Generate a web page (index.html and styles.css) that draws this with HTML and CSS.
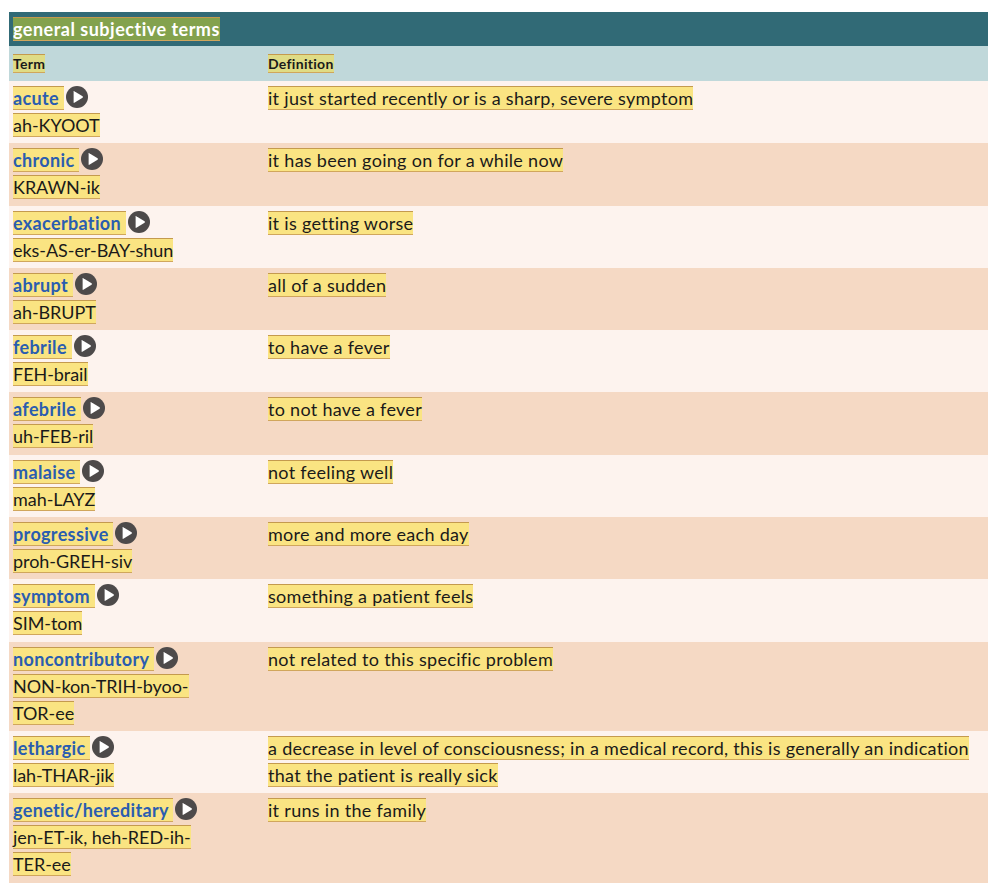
FILE: index.html
```html
<!DOCTYPE html>
<html lang="en">
<head>
<meta charset="utf-8">
<title>General subjective terms</title>
<link rel="stylesheet" href="styles.css">
</head>
<body>
<svg class="defs" width="0" height="0" aria-hidden="true"><symbol id="play" viewBox="0 0 22 22"><circle cx="11" cy="11" r="11" fill="#4d4a4a"/><path d="M7.6 5.6 Q7.6 4.9 8.3 5.2 L16.6 10.3 Q17.3 11 16.6 11.7 L8.3 16.8 Q7.6 17.1 7.6 16.4 Z" fill="#fff"/></symbol></svg>
<table class="terms">
<caption class="terms-title"><mark class="hl hl-title">general subjective terms</mark></caption>
<thead><tr><th class="col-term"><mark class="hl hl-head">Term</mark></th><th><mark class="hl hl-head">Definition</mark></th></tr></thead>
<tbody>
<tr><td><a class="term"><mark class="hl">acute&nbsp;</mark></a><svg class="play"><use href="#play"/></svg><br><mark class="hl say">ah-KYOOT</mark></td><td><mark class="hl">it just started recently or is a sharp, severe symptom</mark></td></tr>
<tr><td><a class="term"><mark class="hl">chronic&nbsp;</mark></a><svg class="play"><use href="#play"/></svg><br><mark class="hl say">KRAWN-ik</mark></td><td><mark class="hl">it has been going on for a while now</mark></td></tr>
<tr><td><a class="term"><mark class="hl">exacerbation&nbsp;</mark></a><svg class="play"><use href="#play"/></svg><br><mark class="hl say">eks-AS-er-BAY-shun</mark></td><td><mark class="hl">it is getting worse</mark></td></tr>
<tr><td><a class="term"><mark class="hl">abrupt&nbsp;</mark></a><svg class="play"><use href="#play"/></svg><br><mark class="hl say">ah-BRUPT</mark></td><td><mark class="hl">all of a sudden</mark></td></tr>
<tr><td><a class="term"><mark class="hl">febrile&nbsp;</mark></a><svg class="play"><use href="#play"/></svg><br><mark class="hl say">FEH-brail</mark></td><td><mark class="hl">to have a fever</mark></td></tr>
<tr><td><a class="term"><mark class="hl">afebrile&nbsp;</mark></a><svg class="play"><use href="#play"/></svg><br><mark class="hl say">uh-FEB-ril</mark></td><td><mark class="hl">to not have a fever</mark></td></tr>
<tr><td><a class="term"><mark class="hl">malaise&nbsp;</mark></a><svg class="play"><use href="#play"/></svg><br><mark class="hl say">mah-LAYZ</mark></td><td><mark class="hl">not feeling well</mark></td></tr>
<tr><td><a class="term"><mark class="hl">progressive&nbsp;</mark></a><svg class="play"><use href="#play"/></svg><br><mark class="hl say">proh-GREH-siv</mark></td><td><mark class="hl">more and more each day</mark></td></tr>
<tr><td><a class="term"><mark class="hl">symptom&nbsp;</mark></a><svg class="play"><use href="#play"/></svg><br><mark class="hl say">SIM-tom</mark></td><td><mark class="hl">something a patient feels</mark></td></tr>
<tr><td><a class="term"><mark class="hl">noncontributory&nbsp;</mark></a><svg class="play"><use href="#play"/></svg><br><mark class="hl say">NON-kon-TRIH-byoo-TOR-ee</mark></td><td><mark class="hl">not related to this specific problem</mark></td></tr>
<tr><td><a class="term"><mark class="hl">lethargic&nbsp;</mark></a><svg class="play"><use href="#play"/></svg><br><mark class="hl say">lah-THAR-jik</mark></td><td><mark class="hl">a decrease in level of consciousness; in a medical record, this is generally an indication that the patient is really sick</mark></td></tr>
<tr><td><a class="term"><mark class="hl">genetic/hereditary&nbsp;</mark></a><svg class="play"><use href="#play"/></svg><br><mark class="hl say">jen-ET-ik, heh-RED-ih-TER-ee</mark></td><td><mark class="hl">it runs in the family</mark></td></tr>
</tbody>
</table>
</body>
</html>
```
FILE: styles.css
```css
html, body { margin: 0; background: #fff; }
body { padding: 12px 12px 0 9px; font-family: Lato, "Liberation Sans", sans-serif; font-size: 18px; line-height: 27px; letter-spacing: 0.3px; color: #1a1a1a; }
.defs { position: absolute; }
.terms { width: 979px; border-collapse: collapse; table-layout: fixed; }
.terms-title { background: #316a76; padding: 5px 4px; text-align: left; font-weight: 700; line-height: 24px; letter-spacing: 0.5px; }
.hl { background: #fae482; color: inherit; border-top: 1px solid #c49a4e; border-bottom: 1px solid #d0a65c; }
.hl-title { background: #83a24d; color: #fff; }
.hl-head { background: #dfdc85; letter-spacing: 0.3px; }
.say { letter-spacing: -0.05px; }
thead th { background: #c0d8da; text-align: left; font-size: 14px; font-weight: 700; padding: 4px; height: 27px; line-height: 27px; }
.col-term { width: 247px; }
td { vertical-align: top; padding: 4px 4px 4.3px; }
td:first-child { padding-right: 50px; }
tbody tr:nth-child(odd) { background: #fdf3ee; }
tbody tr:nth-child(even) { background: #f5d9c4; }
.term { color: #2a5db0; font-weight: 700; letter-spacing: 0.35px; }
.play { width: 22px; height: 22px; margin-left: 2px; vertical-align: -3px; }
```
